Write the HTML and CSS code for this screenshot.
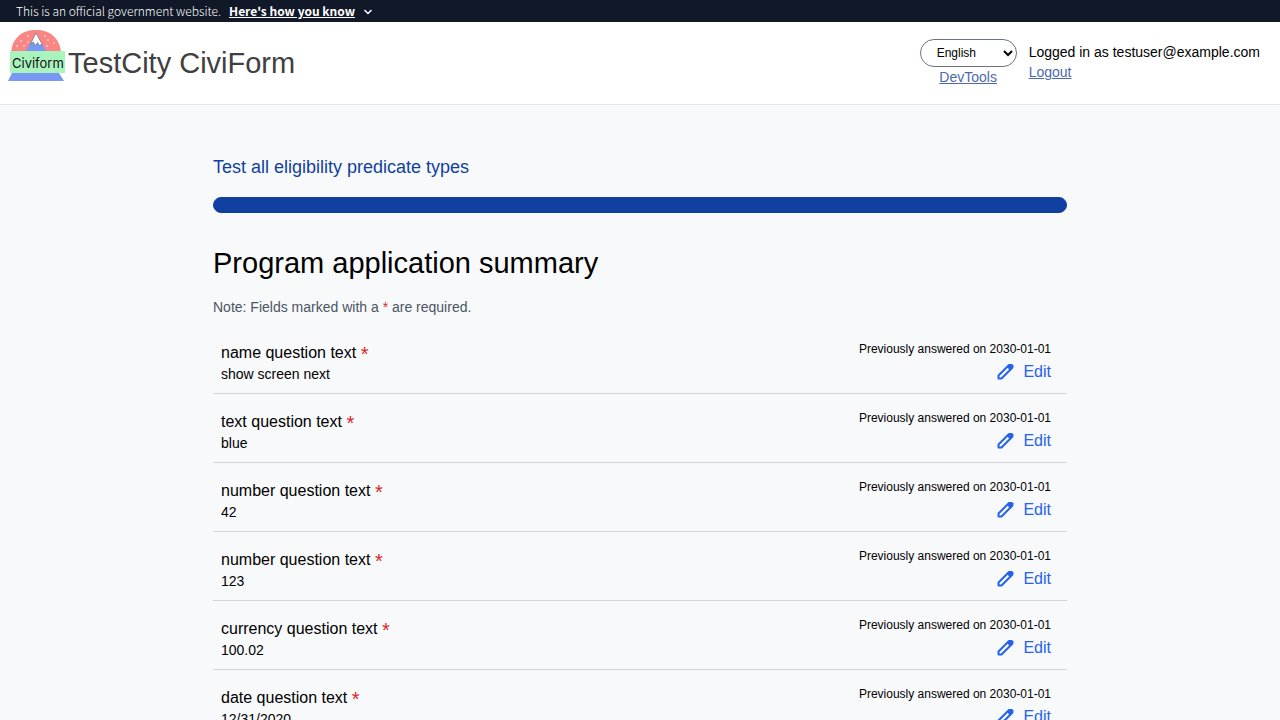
FILE: index.html
```html
<!DOCTYPE html>
<html lang="en">
<head>
<meta charset="utf-8">
<meta name="viewport" content="width=device-width, initial-scale=1">
<title>Program application summary</title>
<link rel="stylesheet" href="styles.css">
</head>
<body>
<svg class="sprite" aria-hidden="true">
  <symbol id="pencil" viewBox="0 0 20 20"><path fill="none" stroke-width="2" stroke-linejoin="round" d="M3.500 16.500v-3L14 3h1.500L17 4.500V6L6.500 16.500z"/><path stroke="none" d="M12 5l3-3h2l1.500 1.500v2L15 8.500z"/></symbol>
</svg>
<div class="banner">
  <span>This is an official government website.</span>
  <button class="banner-button" type="button">Here's how you know</button>
  <svg class="chevron" viewBox="0 0 10 10"><path d="M1.500 4 5 7.500 8.500 4"/></svg>
</div>
<header class="header">
  <a class="brand" href="#">
    <svg class="logo" viewBox="0 0 60 56" role="img" aria-label="Civiform">
      <path fill="#fa8585" d="M3 25C4 10 14 2 28 2s24 8 25 23z"/>
      <path fill="#7899f3" d="M18 23 28 5l10 18zM4 45h47l5 8H0z"/>
      <path fill="#fff" stroke="#555" stroke-width=".5" d="M28 5 22.500 16l3-2 2 4 2-3.500 2 3L34 16z"/>
      <g fill="#fff"><circle cx="20" cy="8" r=".8"/><circle cx="13" cy="13" r=".8"/><circle cx="20" cy="14" r=".8"/><circle cx="9" cy="18" r=".8"/><circle cx="16" cy="18" r=".8"/><circle cx="37" cy="8" r=".8"/><circle cx="40" cy="12" r=".8"/><circle cx="46" cy="15" r=".8"/><circle cx="39" cy="18" r=".8"/></g>
      <path fill="#a9f3bd" d="M2 23h55v22H2z"/>
      <text class="logo-text" x="4" y="40">Civiform</text>
    </svg>
    <span class="brand-name">TestCity CiviForm</span>
  </a>
  <div class="tools">
    <select class="language" aria-label="Language"><option>English</option></select>
    <a class="link" href="#">DevTools</a>
  </div>
  <div class="account">
    <span>Logged in as testuser@example.com</span>
    <a class="link" href="#">Logout</a>
  </div>
</header>
<main class="main">
  <h2 class="program">Test all eligibility predicate types</h2>
  <div class="progress"></div>
  <h1 class="title">Program application summary</h1>
  <p class="note">Note: Fields marked with a <span class="required">*</span> are required.</p>
  <section class="row"><div class="question"><h3>name question text <span class="required">*</span></h3><p>show screen next</p></div><div class="actions"><span>Previously answered on 2030-01-01</span><a class="edit" href="#"><svg><use href="#pencil"/></svg>Edit</a></div></section>
  <section class="row"><div class="question"><h3>text question text <span class="required">*</span></h3><p>blue</p></div><div class="actions"><span>Previously answered on 2030-01-01</span><a class="edit" href="#"><svg><use href="#pencil"/></svg>Edit</a></div></section>
  <section class="row"><div class="question"><h3>number question text <span class="required">*</span></h3><p>42</p></div><div class="actions"><span>Previously answered on 2030-01-01</span><a class="edit" href="#"><svg><use href="#pencil"/></svg>Edit</a></div></section>
  <section class="row"><div class="question"><h3>number question text <span class="required">*</span></h3><p>123</p></div><div class="actions"><span>Previously answered on 2030-01-01</span><a class="edit" href="#"><svg><use href="#pencil"/></svg>Edit</a></div></section>
  <section class="row"><div class="question"><h3>currency question text <span class="required">*</span></h3><p>100.02</p></div><div class="actions"><span>Previously answered on 2030-01-01</span><a class="edit" href="#"><svg><use href="#pencil"/></svg>Edit</a></div></section>
  <section class="row"><div class="question"><h3>date question text <span class="required">*</span></h3><p>12/31/2020</p></div><div class="actions"><span>Previously answered on 2030-01-01</span><a class="edit" href="#"><svg><use href="#pencil"/></svg>Edit</a></div></section>
</main>
</body>
</html>
```
FILE: styles.css
```css
* { box-sizing: border-box; }
body { margin: 0; background: #f8f9fb; color: #000; font: 14px/20px "Liberation Sans", Arial, sans-serif; }
h1, h2, h3, p { margin: 0; font-weight: 400; }
.sprite { display: none; }
.banner { display: flex; align-items: center; background: #111827; color: #fff; padding: 0 16px; height: 22px; font: 300 12px/22px "Noto Sans CJK SC", sans-serif; }
.banner-button { margin-left: 8px; padding: 0; border: 0; background: none; color: inherit; font: inherit; font-weight: 700; text-decoration: underline; }
.chevron { width: 10px; height: 10px; margin-left: 8px; fill: none; stroke: #fff; stroke-width: 1.5; }
.header { display: flex; align-items: flex-start; background: #fff; border-bottom: 1px solid #e5e7eb; padding: 6px 20px 17px 8px; }
.brand { display: flex; align-items: center; margin-right: auto; color: #404040; text-decoration: none; }
.logo { width: 60px; height: 56px; }
.logo-text { font: 13px Inter, sans-serif; fill: #111; }
.brand-name { font-size: 29px; line-height: 36px; padding-top: 14px; }
.tools { display: flex; flex-direction: column; align-items: center; padding-top: 11px; margin-right: 12px; }
.language { width: 97px; height: 28px; padding: 0 0 0 12px; border: 1px solid #6b7280; border-radius: 14px; background: #fff; color: #000; font: 12px "Liberation Sans", Arial, sans-serif; }
.account { display: flex; flex-direction: column; align-items: flex-start; padding-top: 14px; }
.link { color: #4d69ad; text-decoration: underline; }
.main { max-width: 854px; margin: 0 auto; padding-top: 48px; }
.program { color: #113f9f; font-size: 18px; line-height: 28px; }
.progress { height: 16px; margin: 16px 0 32px; border: 1px solid #113f9f; border-radius: 8px; background: #113f9f; }
.title { font-size: 29px; line-height: 36px; }
.note { margin: 16px 0 8px; color: #4b5563; }
.required { color: #dc2626; }
.row { display: flex; justify-content: space-between; height: 69px; padding: 0 16px 0 8px; border-bottom: 1px solid #d1d5db; }
.question { padding-top: 17px; }
.question h3 { font-size: 16px; line-height: 22px; }
.question .required { font-size: 20px; line-height: 16px; vertical-align: -3px; }
.actions { display: flex; flex-direction: column; align-items: flex-end; padding-top: 16px; font-size: 12px; line-height: 16px; }
.edit { display: flex; align-items: center; gap: 8px; margin-top: 3px; color: #2563eb; font-size: 16px; line-height: 24px; text-decoration: none; }
.edit svg { width: 20px; height: 20px; fill: #2563eb; stroke: #2563eb; }
```
